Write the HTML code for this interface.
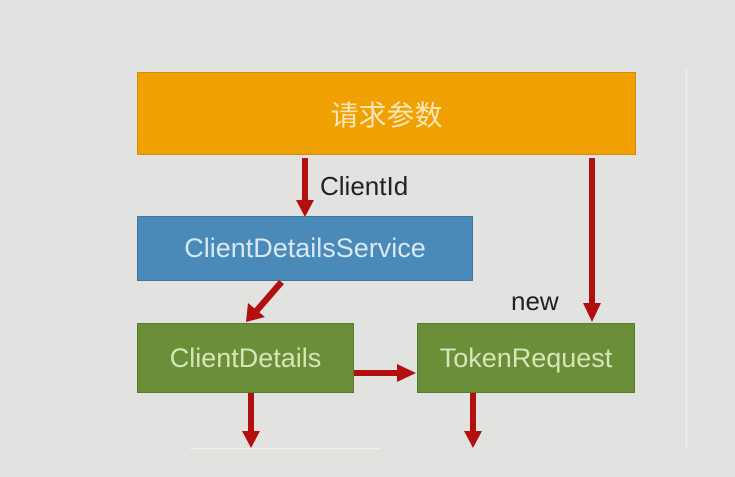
<!DOCTYPE html>
<html><head><meta charset="utf-8"><style>
html,body{margin:0;padding:0}
body{width:735px;height:477px;background:#e2e2e0;position:relative;overflow:hidden;font-family:"Liberation Sans","Noto Sans CJK SC",sans-serif}
.b{position:absolute;display:flex;align-items:center;justify-content:center;box-sizing:border-box}
.o{left:137px;top:72px;width:499px;height:83px;background:#f0a000;border:1px solid #d08c10;color:#fbe6b8;font-size:28px}
.bl{left:137px;top:216px;width:336px;height:65px;background:#4a8ab8;border:1px solid #3f77a0;color:#d7e8f4;font-size:27px}
.g{top:323px;height:70px;background:#6a8f38;border:1px solid #5a7a30;color:#d4e6b8;font-size:27px}
.t{position:absolute;color:#222;font-size:26px}
</style></head><body>
<div style="position:absolute;left:686px;top:68px;width:1px;height:380px;background:#f0f0ee"></div>
<div style="position:absolute;left:190px;top:448px;width:190px;height:1px;background:#f2f2e8"></div>
<div class="b o">请求参数</div>
<div class="b bl">ClientDetailsService</div>
<div class="b g" style="left:137px;width:217px">ClientDetails</div>
<div class="b g" style="left:417px;width:218px">TokenRequest</div>
<div class="t" style="left:320px;top:171px">ClientId</div>
<div class="t" style="left:511px;top:286px">new</div>
<svg width="735" height="477" style="position:absolute;left:0;top:0">
<g fill="#b40f0f">
<rect x="302" y="158" width="6" height="44"/><polygon points="296,200 314,200 305,217"/>
<rect x="589" y="158" width="6" height="148"/><polygon points="583,303 601,303 592,322"/>
<polygon points="279,280 284,284 258,314 253,310"/><polygon points="246,322 248,303 265,317"/>
<rect x="354" y="370" width="46" height="6"/><polygon points="397,364 397,382 416,373"/>
<rect x="248" y="393" width="6" height="40"/><polygon points="242,431 260,431 251,448"/>
<rect x="470" y="393" width="6" height="40"/><polygon points="464,431 482,431 473,448"/>
</g></svg>
</body></html>
